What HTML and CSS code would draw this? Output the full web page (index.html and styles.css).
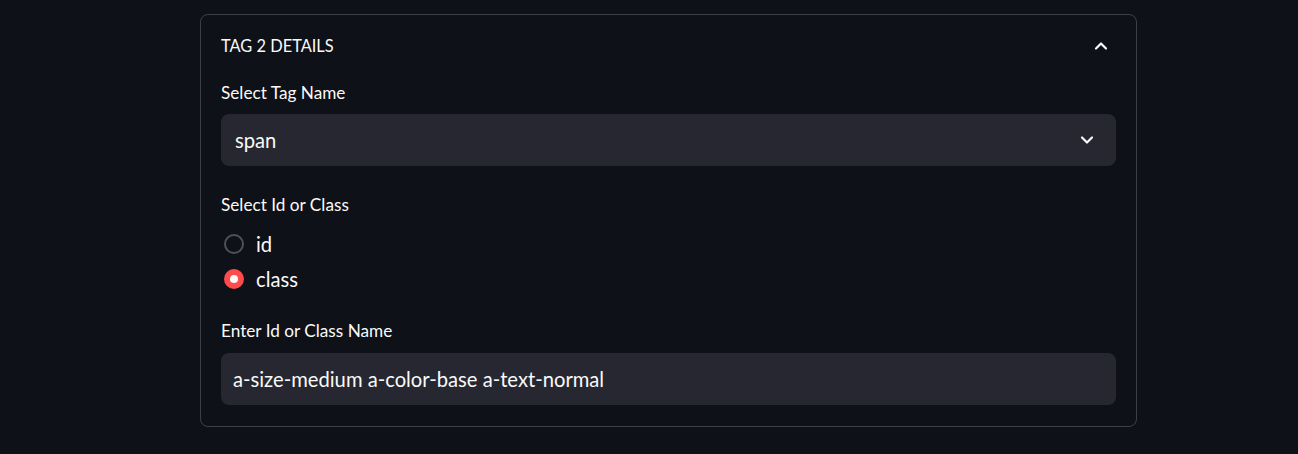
FILE: index.html
```html
<!DOCTYPE html>
<html>
<head>
<meta charset="utf-8">
<link rel="stylesheet" href="styles.css">
</head>
<body>
<div class="page">
  <div class="expander">
    <div class="exp-header">
      <span class="exp-title">TAG 2 DETAILS</span>
      <svg class="chev" width="16" height="16" viewBox="0 0 16 16"><path d="M3 10.5 L8 5.5 L13 10.5" fill="none" stroke="#fafafa" stroke-width="2.2" stroke-linecap="round" stroke-linejoin="round"/></svg>
    </div>
    <div class="exp-body">
      <div class="label">Select Tag Name</div>
      <div class="select">
        <span class="value">span</span>
        <svg class="chev" width="16" height="16" viewBox="0 0 16 16"><path d="M3 5.5 L8 10.5 L13 5.5" fill="none" stroke="#fafafa" stroke-width="2.2" stroke-linecap="round" stroke-linejoin="round"/></svg>
      </div>
      <div class="label gap1">Select Id or Class</div>
      <div class="radios">
        <div class="radio"><span class="dot"></span><span class="rtext">id</span></div>
        <div class="radio on"><span class="dot"></span><span class="rtext">class</span></div>
      </div>
      <div class="label gap2">Enter Id or Class Name</div>
      <div class="input"><span class="value">a-size-medium a-color-base a-text-normal</span></div>
    </div>
  </div>
</div>
</body>
</html>
```
FILE: styles.css
```css
html, body { margin: 0; padding: 0; }
body {
  background: #0e1117;
  color: #fafafa;
  font-family: "Lato", "Noto Sans", sans-serif;
  height: 454px;
  overflow: hidden;
}
.page { padding: 14px 0 0 200px; }
.expander {
  width: 935px;
  border: 1px solid rgba(250,250,250,0.2);
  border-radius: 8px;
}
.exp-header {
  display: flex;
  align-items: center;
  justify-content: space-between;
  padding: 19px 27px 23px 20px;
  height: 24px;
}
.exp-title { font-size: 16.4px; line-height: 24px; }
.exp-body { padding: 0 20px 21px 20px; }
.label { font-size: 17.2px; line-height: 24px; margin-bottom: 9px; }
.gap1 { margin-top: 27px; margin-bottom: 9px; }
.gap2 { margin-top: 23px; margin-bottom: 10px; }
.select, .input {
  height: 52px;
  background: #262730;
  border-radius: 8px;
  display: flex;
  align-items: center;
  justify-content: space-between;
  box-sizing: border-box;
}
.select { padding: 0 21px 0 14px; }
.input { padding: 0 12px; }
.value { font-size: 20.2px; }
.radios { display: flex; flex-direction: column; }
.radio { height: 35px; display: flex; align-items: center; }
.dot {
  width: 20px; height: 20px;
  box-sizing: border-box;
  border-radius: 50%;
  border: 2px solid #4f525a;
  margin-left: 3px;
  margin-right: 12px;
  display: flex; align-items: center; justify-content: center;
}
.radio.on .dot { background: #ff4b4b; border-color: #ff4b4b; }
.radio.on .dot::after {
  content: ""; width: 8px; height: 8px; border-radius: 50%; background: #fafafa;
}
.rtext { font-size: 20.2px; }
```
